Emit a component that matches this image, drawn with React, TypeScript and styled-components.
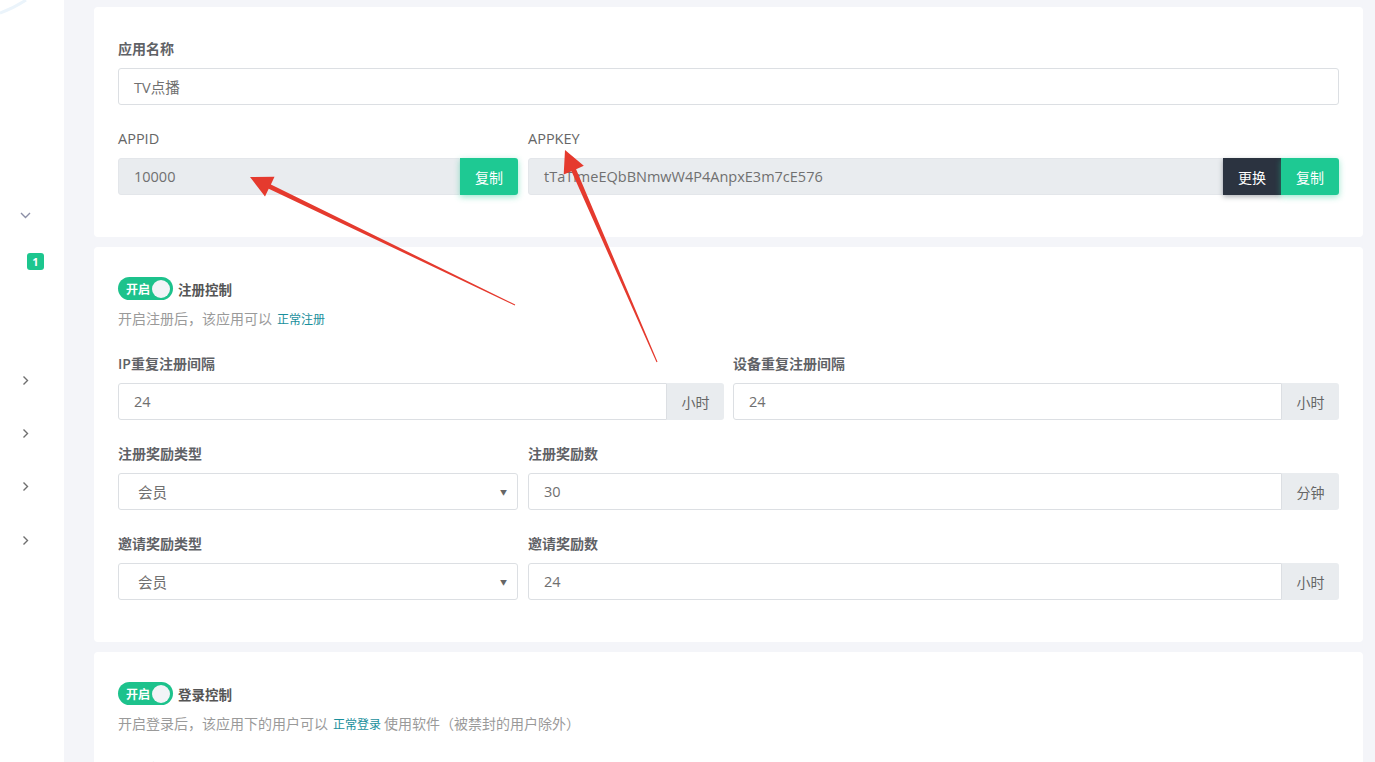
import * as React from 'react';
import styled, { createGlobalStyle } from 'styled-components';

const GlobalStyle = createGlobalStyle`
  html, body {
    margin: 0;
    padding: 0;
    background: #f4f5f9;
  }
  body {
    font-family: "Open Sans", "Noto Sans CJK SC", sans-serif;
    color: #555;
    overflow: hidden;
  }
`;

const Page = styled.div`
  position: relative;
  display: flex;
  width: 1375px;
  height: 762px;
  overflow: hidden;
`;

const Sidebar = styled.div`
  position: relative;
  width: 64px;
  flex: none;
  background: #fff;
  display: flex;
  flex-direction: column;
  align-items: center;
`;

const Logo = styled.svg`
  position: absolute;
  left: 0;
  top: 0;
`;

const NavIcon = styled.div<{ $top: number }>`
  width: 20px;
  height: 20px;
  margin-top: ${(p) => p.$top}px;
  margin-left: -14px;
  display: flex;
  align-items: center;
  justify-content: center;
  color: #8c8fa6;
`;

const Badge = styled.span`
  margin-top: 28px;
  margin-left: 7px;
  width: 17px;
  height: 17px;
  border-radius: 3px;
  background: #1cc68e;
  color: #fff;
  font: 700 11px/17px "Open Sans", sans-serif;
  text-align: center;
`;

const Main = styled.main`
  flex: 1;
  padding: 7px 12px 0 30px;
  display: flex;
  flex-direction: column;
  gap: 10px;
`;

const Card = styled.section<{ $top?: number }>`
  background: #fff;
  border-radius: 4px;
  padding: ${(p) => p.$top ?? 30}px 24px 18px;
  flex: none;
`;

const Group = styled.div`
  margin-bottom: 24px;
`;

const Label = styled.div<{ $plain?: boolean }>`
  font-size: ${(p) => (p.$plain ? '14.5px' : '14px')};
  font-weight: ${(p) => (p.$plain ? 400 : 600)};
  color: ${(p) => (p.$plain ? '#666' : '#5f6266')};
  line-height: 20px;
  margin-bottom: 9px;
`;

const Row = styled.div<{ $cols: string; $gap: number }>`
  display: grid;
  grid-template-columns: ${(p) => p.$cols};
  column-gap: ${(p) => p.$gap}px;
`;

const InputGroup = styled.div`
  display: flex;
  height: 37px;
`;

const Field = styled.div<{ $readonly?: boolean; $pad?: number }>`
  flex: 1;
  min-width: 0;
  box-sizing: border-box;
  height: 37px;
  display: flex;
  align-items: center;
  padding-left: ${(p) => p.$pad ?? 15}px;
  padding-right: 10px;
  border: 1px solid ${(p) => (p.$readonly ? '#e3e6ea' : '#dcdfe3')};
  border-radius: 3px;
  background: ${(p) => (p.$readonly ? '#e9ecef' : '#fff')};
  color: #707070;
  font-size: 14.5px;
  ${InputGroup} > &:not(:last-child) {
    border-top-right-radius: 0;
    border-bottom-right-radius: 0;
  }
`;

const Caret = styled.span`
  margin-left: auto;
  font-size: 7px;
  color: #666;
`;

const Addon = styled.div`
  width: 57px;
  flex: none;
  display: flex;
  align-items: center;
  justify-content: center;
  background: #e9ecef;
  border-radius: 0 3px 3px 0;
  color: #666;
  font-size: 14px;
`;

const Button = styled.div<{ $dark?: boolean }>`
  width: 58px;
  flex: none;
  display: flex;
  align-items: center;
  justify-content: center;
  color: #fff;
  font-size: 14px;
  background: ${(p) => (p.$dark ? '#2b3340' : '#1ec993')};
  box-shadow: ${(p) =>
    p.$dark ? '0 2px 5px rgba(30, 36, 48, 0.35)' : '0 2px 6px rgba(30, 201, 147, 0.45)'};
  position: relative;
  &:last-child {
    border-radius: 0 3px 3px 0;
  }
`;

const SwitchLine = styled.div`
  display: flex;
  align-items: center;
  gap: 5px;
  height: 23px;
`;

const Switch = styled.div`
  box-sizing: border-box;
  width: 55px;
  height: 23px;
  border-radius: 12px;
  background: #1dc28c;
  display: flex;
  align-items: center;
  padding: 0 3px 0 8px;
  color: #fff;
  font-size: 12px;
  font-weight: 700;
`;

const Knob = styled.span`
  margin-left: auto;
  width: 18px;
  height: 18px;
  border-radius: 50%;
  background: #f2f4f7;
`;

const SwitchTitle = styled.span`
  font-size: 13.5px;
  font-weight: 700;
  color: #555;
`;

const Hint = styled.div`
  margin-top: 9px;
  margin-bottom: 24px;
  line-height: 20px;
  font-size: 14px;
  color: #9a9a9a;
`;

const HintLink = styled.span`
  color: #1a8f9c;
  font-size: 12px;
  margin: 0 3px 0 5px;
`;

const Arrows = styled.svg`
  position: absolute;
  left: 0;
  top: 0;
  pointer-events: none;
`;

const ChevronDown = () => (
  <svg width="11" height="7" viewBox="0 0 11 7" fill="none">
    <path d="M1 1l4.5 4.5L10 1" stroke="currentColor" strokeWidth="1.4" />
  </svg>
);

const ChevronRight = () => (
  <svg width="7" height="11" viewBox="0 0 7 11" fill="none">
    <path d="M1.5 1.5l4 4-4 4" stroke="#6f6f6f" strokeWidth="1.4" />
  </svg>
);

const Toggle = ({ title }: { title: string }) => (
  <SwitchLine>
    <Switch>
      开启
      <Knob />
    </Switch>
    <SwitchTitle>{title}</SwitchTitle>
  </SwitchLine>
);

const App = () => {
  return (
    <Page>
      <GlobalStyle />
      <Sidebar>
        <Logo width="40" height="20" viewBox="0 0 40 20">
          <path d="M0 13 Q14 8 26 0" stroke="#ebf4fb" strokeWidth="3" fill="none" />
        </Logo>
        <NavIcon $top={205}>
          <ChevronDown />
        </NavIcon>
        <Badge>1</Badge>
        <NavIcon $top={100}>
          <ChevronRight />
        </NavIcon>
        <NavIcon $top={33}>
          <ChevronRight />
        </NavIcon>
        <NavIcon $top={33}>
          <ChevronRight />
        </NavIcon>
        <NavIcon $top={34}>
          <ChevronRight />
        </NavIcon>
      </Sidebar>

      <Main>
        <Card $top={32}>
          <Group>
            <Label>应用名称</Label>
            <InputGroup>
              <Field>TV点播</Field>
            </InputGroup>
          </Group>
          <Row $cols="400px 1fr" $gap={10}>
            <Group>
              <Label $plain>APPID</Label>
              <InputGroup>
                <Field $readonly>10000</Field>
                <Button>复制</Button>
              </InputGroup>
            </Group>
            <Group>
              <Label $plain>APPKEY</Label>
              <InputGroup>
                <Field $readonly>tTaTlmeEQbBNmwW4P4AnpxE3m7cE576</Field>
                <Button $dark>更换</Button>
                <Button>复制</Button>
              </InputGroup>
            </Group>
          </Row>
        </Card>

        <Card>
          <Toggle title="注册控制" />
          <Hint>
            开启注册后，该应用可以<HintLink>正常注册</HintLink>
          </Hint>
          <Row $cols="1fr 1fr" $gap={9}>
            <Group>
              <Label>IP重复注册间隔</Label>
              <InputGroup>
                <Field>24</Field>
                <Addon>小时</Addon>
              </InputGroup>
            </Group>
            <Group>
              <Label>设备重复注册间隔</Label>
              <InputGroup>
                <Field>24</Field>
                <Addon>小时</Addon>
              </InputGroup>
            </Group>
          </Row>
          <Row $cols="400px 1fr" $gap={10}>
            <Group>
              <Label>注册奖励类型</Label>
              <InputGroup>
                <Field $pad={19}>
                  会员<Caret>▼</Caret>
                </Field>
              </InputGroup>
            </Group>
            <Group>
              <Label>注册奖励数</Label>
              <InputGroup>
                <Field>30</Field>
                <Addon>分钟</Addon>
              </InputGroup>
            </Group>
          </Row>
          <Row $cols="400px 1fr" $gap={10}>
            <Group>
              <Label>邀请奖励类型</Label>
              <InputGroup>
                <Field $pad={19}>
                  会员<Caret>▼</Caret>
                </Field>
              </InputGroup>
            </Group>
            <Group>
              <Label>邀请奖励数</Label>
              <InputGroup>
                <Field>24</Field>
                <Addon>小时</Addon>
              </InputGroup>
            </Group>
          </Row>
        </Card>

        <Card>
          <Toggle title="登录控制" />
          <Hint>
            开启登录后，该应用下的用户可以<HintLink>正常登录</HintLink>使用软件（被禁封的用户除外）
          </Hint>
          <Group>
            <Label>登录方式</Label>
          </Group>
        </Card>
      </Main>

      <Arrows width="1375" height="762" viewBox="0 0 1375 762">
        <polygon
          fill="#e53a2e"
          points="515.2,304.6 270.9,184.4 274.5,176.8 250,177 265,196.5 268.7,188.8 514.8,305.4"
        />
        <polygon
          fill="#e53a2e"
          points="657.5,361.8 576.1,169.2 583.8,165.8 565,150 563.7,174.6 571.5,171.2 656.5,362.2"
        />
      </Arrows>
    </Page>
  );
};

export default App;
